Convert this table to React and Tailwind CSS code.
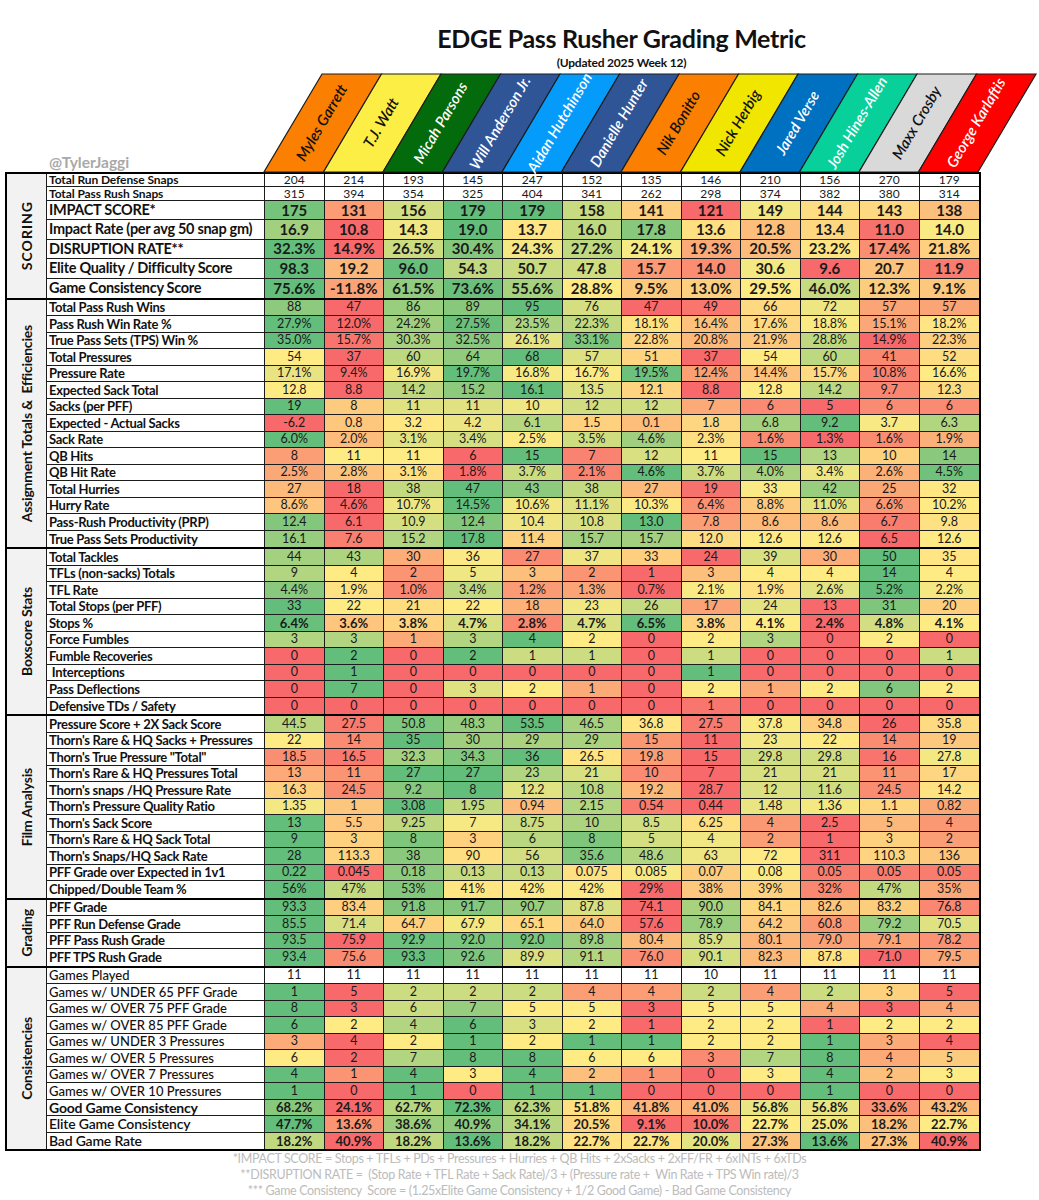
import React from 'react';

// EDGE pass rusher grading sheet (spreadsheet style heat-map table)

const players = [
  { name: 'Myles Garrett', bg: '#fb7f00', fg: '#111' },
  { name: 'T.J. Watt', bg: '#fcee45', fg: '#111' },
  { name: 'Micah Parsons', bg: '#046b0c', fg: '#fff' },
  { name: 'Will Anderson Jr.', bg: '#2f5597', fg: '#fff' },
  { name: 'Aidan Hutchinson', bg: '#049bfb', fg: '#fff' },
  { name: 'Danielle Hunter', bg: '#2f5597', fg: '#fff' },
  { name: 'Nik Bonitto', bg: '#fb7f00', fg: '#111' },
  { name: 'Nick Herbig', bg: '#f0e600', fg: '#111' },
  { name: 'Jared Verse', bg: '#0070c0', fg: '#fff' },
  { name: 'Josh Hines-Allen', bg: '#08d09b', fg: '#fff' },
  { name: 'Maxx Crosby', bg: '#d9d9d9', fg: '#111' },
  { name: 'George Karlaftis', bg: '#ff0000', fg: '#fff' },
];

const sections = [
  {
    title: 'SCORING',
    scoring: true,
    rows: [
      { label: 'Total Run Defense Snaps', plain: true, h: 'h-[13px]', vals: ['204', '214', '193', '145', '247', '152', '135', '146', '210', '156', '270', '179'] },
      { label: 'Total Pass Rush Snaps', plain: true, h: 'h-[14px]', vals: ['315', '394', '354', '325', '404', '341', '262', '298', '374', '382', '380', '314'] },
      { label: 'IMPACT SCORE*', big: true, vals: ['175', '131', '156', '179', '179', '158', '141', '121', '149', '144', '143', '138'] },
      { label: 'Impact Rate (per avg 50 snap gm)', big: true, vals: ['16.9', '10.8', '14.3', '19.0', '13.7', '16.0', '17.8', '13.6', '12.8', '13.4', '11.0', '14.0'] },
      { label: 'DISRUPTION RATE**', big: true, vals: ['32.3%', '14.9%', '26.5%', '30.4%', '24.3%', '27.2%', '24.1%', '19.3%', '20.5%', '23.2%', '17.4%', '21.8%'] },
      { label: 'Elite Quality / Difficulty Score', big: true, vals: ['98.3', '19.2', '96.0', '54.3', '50.7', '47.8', '15.7', '14.0', '30.6', '9.6', '20.7', '11.9'] },
      { label: 'Game Consistency Score', big: true, min: -45, vals: ['75.6%', '-11.8%', '61.5%', '73.6%', '55.6%', '28.8%', '9.5%', '13.0%', '29.5%', '46.0%', '12.3%', '9.1%'] },
    ],
  },
  {
    title: 'Assignment Totals &  Efficiencies',
    rows: [
      { label: 'Total Pass Rush Wins', vals: ['88', '47', '86', '89', '95', '76', '47', '49', '66', '72', '57', '57'] },
      { label: 'Pass Rush Win Rate %', vals: ['27.9%', '12.0%', '24.2%', '27.5%', '23.5%', '22.3%', '18.1%', '16.4%', '17.6%', '18.8%', '15.1%', '18.2%'] },
      { label: 'True Pass Sets (TPS) Win %', vals: ['35.0%', '15.7%', '30.3%', '32.5%', '26.1%', '33.1%', '22.8%', '20.8%', '21.9%', '28.8%', '14.9%', '22.3%'] },
      { label: 'Total Pressures', vals: ['54', '37', '60', '64', '68', '57', '51', '37', '54', '60', '41', '52'] },
      { label: 'Pressure Rate', vals: ['17.1%', '9.4%', '16.9%', '19.7%', '16.8%', '16.7%', '19.5%', '12.4%', '14.4%', '15.7%', '10.8%', '16.6%'] },
      { label: 'Expected Sack Total', vals: ['12.8', '8.8', '14.2', '15.2', '16.1', '13.5', '12.1', '8.8', '12.8', '14.2', '9.7', '12.3'] },
      { label: 'Sacks (per PFF)', vals: ['19', '8', '11', '11', '10', '12', '12', '7', '6', '5', '6', '6'] },
      { label: 'Expected - Actual Sacks', vals: ['-6.2', '0.8', '3.2', '4.2', '6.1', '1.5', '0.1', '1.8', '6.8', '9.2', '3.7', '6.3'] },
      { label: 'Sack Rate', vals: ['6.0%', '2.0%', '3.1%', '3.4%', '2.5%', '3.5%', '4.6%', '2.3%', '1.6%', '1.3%', '1.6%', '1.9%'] },
      { label: 'QB Hits', vals: ['8', '11', '11', '6', '15', '7', '12', '11', '15', '13', '10', '14'] },
      { label: 'QB Hit Rate', vals: ['2.5%', '2.8%', '3.1%', '1.8%', '3.7%', '2.1%', '4.6%', '3.7%', '4.0%', '3.4%', '2.6%', '4.5%'] },
      { label: 'Total Hurries', vals: ['27', '18', '38', '47', '43', '38', '27', '19', '33', '42', '25', '32'] },
      { label: 'Hurry Rate', vals: ['8.6%', '4.6%', '10.7%', '14.5%', '10.6%', '11.1%', '10.3%', '6.4%', '8.8%', '11.0%', '6.6%', '10.2%'] },
      { label: 'Pass-Rush Productivity (PRP)', vals: ['12.4', '6.1', '10.9', '12.4', '10.4', '10.8', '13.0', '7.8', '8.6', '8.6', '6.7', '9.8'] },
      { label: 'True Pass Sets Productivity', vals: ['16.1', '7.6', '15.2', '17.8', '11.4', '15.7', '15.7', '12.0', '12.6', '12.6', '6.5', '12.6'] },
    ],
  },
  {
    title: 'Boxscore Stats',
    rows: [
      { label: 'Total Tackles', vals: ['44', '43', '30', '36', '27', '37', '33', '24', '39', '30', '50', '35'] },
      { label: 'TFLs (non-sacks) Totals', vals: ['9', '4', '2', '5', '3', '2', '1', '3', '4', '4', '14', '4'] },
      { label: 'TFL Rate', vals: ['4.4%', '1.9%', '1.0%', '3.4%', '1.2%', '1.3%', '0.7%', '2.1%', '1.9%', '2.6%', '5.2%', '2.2%'] },
      { label: 'Total Stops (per PFF)', vals: ['33', '22', '21', '22', '18', '23', '26', '17', '24', '13', '31', '20'] },
      { label: 'Stops %', boldVals: true, vals: ['6.4%', '3.6%', '3.8%', '4.7%', '2.8%', '4.7%', '6.5%', '3.8%', '4.1%', '2.4%', '4.8%', '4.1%'] },
      { label: 'Force Fumbles', vals: ['3', '3', '1', '3', '4', '2', '0', '2', '3', '0', '2', '0'] },
      { label: 'Fumble Recoveries', vals: ['0', '2', '0', '2', '1', '1', '0', '1', '0', '0', '0', '1'] },
      { label: '\u00a0Interceptions', vals: ['0', '1', '0', '0', '0', '0', '0', '1', '0', '0', '0', '0'] },
      { label: 'Pass Deflections', vals: ['0', '7', '0', '3', '2', '1', '0', '2', '1', '2', '6', '2'] },
      { label: 'Defensive TDs / Safety', fixed: '#f8766d', vals: ['0', '0', '0', '0', '0', '0', '0', '1', '0', '0', '0', '0'] },
    ],
  },
  {
    title: 'Film Analysis',
    rows: [
      { label: 'Pressure Score + 2X Sack Score', vals: ['44.5', '27.5', '50.8', '48.3', '53.5', '46.5', '36.8', '27.5', '37.8', '34.8', '26', '35.8'] },
      { label: "Thorn's Rare & HQ Sacks + Pressures", vals: ['22', '14', '35', '30', '29', '29', '15', '11', '23', '22', '14', '19'] },
      { label: 'Thorn\'s True Pressure "Total"', vals: ['18.5', '16.5', '32.3', '34.3', '36', '26.5', '19.8', '15', '29.8', '29.8', '16', '27.8'] },
      { label: "Thorn's Rare & HQ Pressures Total", vals: ['13', '11', '27', '27', '23', '21', '10', '7', '21', '21', '11', '17'] },
      { label: "Thorn's snaps /HQ Pressure Rate", rev: true, vals: ['16.3', '24.5', '9.2', '8', '12.2', '10.8', '19.2', '28.7', '12', '11.6', '24.5', '14.2'] },
      { label: "Thorn's Pressure Quality Ratio", vals: ['1.35', '1', '3.08', '1.95', '0.94', '2.15', '0.54', '0.44', '1.48', '1.36', '1.1', '0.82'] },
      { label: "Thorn's Sack Score", vals: ['13', '5.5', '9.25', '7', '8.75', '10', '8.5', '6.25', '4', '2.5', '5', '4'] },
      { label: "Thorn's Rare & HQ Sack Total", vals: ['9', '3', '8', '3', '6', '8', '5', '4', '2', '1', '3', '2'] },
      { label: "Thorn's Snaps/HQ Sack Rate", rev: true, vals: ['28', '113.3', '38', '90', '56', '35.6', '48.6', '63', '72', '311', '110.3', '136'] },
      { label: 'PFF Grade over Expected in 1v1', vals: ['0.22', '0.045', '0.18', '0.13', '0.13', '0.075', '0.085', '0.07', '0.08', '0.05', '0.05', '0.05'] },
      { label: 'Chipped/Double Team %', vals: ['56%', '47%', '53%', '41%', '42%', '42%', '29%', '38%', '39%', '32%', '47%', '35%'] },
    ],
  },
  {
    title: 'Grading',
    rows: [
      { label: 'PFF Grade', vals: ['93.3', '83.4', '91.8', '91.7', '90.7', '87.8', '74.1', '90.0', '84.1', '82.6', '83.2', '76.8'] },
      { label: 'PFF Run Defense Grade', vals: ['85.5', '71.4', '64.7', '67.9', '65.1', '64.0', '57.6', '78.9', '64.2', '60.8', '79.2', '70.5'] },
      { label: 'PFF Pass Rush Grade', vals: ['93.5', '75.9', '92.9', '92.0', '92.0', '89.8', '80.4', '85.9', '80.1', '79.0', '79.1', '78.2'] },
      { label: 'PFF TPS Rush Grade', vals: ['93.4', '75.6', '93.3', '92.6', '89.9', '91.1', '76.0', '90.1', '82.3', '87.8', '71.0', '79.5'] },
    ],
  },
  {
    title: 'Consistencies',
    rows: [
      { label: 'Games Played', plain: true, light: true, vals: ['11', '11', '11', '11', '11', '11', '11', '10', '11', '11', '11', '11'] },
      { label: 'Games w/ UNDER 65 PFF Grade', light: true, rev: true, vals: ['1', '5', '2', '2', '2', '4', '4', '2', '4', '2', '3', '5'] },
      { label: 'Games w/ OVER 75 PFF Grade', light: true, vals: ['8', '3', '6', '7', '5', '5', '3', '5', '5', '4', '3', '4'] },
      { label: 'Games w/ OVER 85 PFF Grade', light: true, vals: ['6', '2', '4', '6', '3', '2', '1', '2', '2', '1', '2', '2'] },
      { label: 'Games w/ UNDER 3 Pressures', light: true, rev: true, vals: ['3', '4', '2', '1', '2', '1', '1', '2', '2', '1', '3', '4'] },
      { label: 'Games w/ OVER 5 Pressures', light: true, vals: ['6', '2', '7', '8', '8', '6', '6', '3', '7', '8', '4', '5'] },
      { label: 'Games w/ OVER 7 Pressures', light: true, vals: ['4', '1', '4', '3', '4', '2', '1', '0', '3', '4', '2', '3'] },
      { label: 'Games w/ OVER 10 Pressures', light: true, vals: ['1', '0', '1', '0', '1', '1', '0', '0', '0', '1', '0', '0'] },
      { label: 'Good Game Consistency', boldVals: true, strong: true, vals: ['68.2%', '24.1%', '62.7%', '72.3%', '62.3%', '51.8%', '41.8%', '41.0%', '56.8%', '56.8%', '33.6%', '43.2%'] },
      { label: 'Elite Game Consistency', boldVals: true, medium: true, vals: ['47.7%', '13.6%', '38.6%', '40.9%', '34.1%', '20.5%', '9.1%', '10.0%', '22.7%', '25.0%', '18.2%', '22.7%'] },
      { label: 'Bad Game Rate', boldVals: true, medium: true, rev: true, vals: ['18.2%', '40.9%', '18.2%', '13.6%', '18.2%', '22.7%', '22.7%', '20.0%', '27.3%', '13.6%', '27.3%', '40.9%'] },
    ],
  },
];

const RED = [248, 105, 107];
const YEL = [255, 235, 132];
const GRN = [99, 190, 123];

const mix = (a, b, t) => {
  const c = a.map((v, i) => Math.round(v + (b[i] - v) * Math.max(0, Math.min(1, t))));
  return `rgb(${c[0]},${c[1]},${c[2]})`;
};

// excel style 3-colour scale: min / median / max
const scaleColors = (row) => {
  if (row.plain) return row.vals.map(() => '#ffffff');
  const nums = row.vals.map((v) => parseFloat(v));
  const sorted = [...nums].sort((a, b) => a - b);
  const n = sorted.length;
  const mid = (sorted[n / 2 - 1] + sorted[n / 2]) / 2;
  const min = row.min ?? sorted[0];
  const max = sorted[n - 1];
  const lo = row.rev ? GRN : RED;
  const hi = row.rev ? RED : GRN;
  return nums.map((v) => {
    if (row.fixed && v === max && max !== min) return row.fixed;
    if (v <= mid) return mid === min ? mix(lo, YEL, 0) : mix(lo, YEL, (v - min) / (mid - min));
    return mix(YEL, hi, (v - mid) / (max - mid));
  });
};

const Row = ({ row, last }) => {
  const colors = scaleColors(row);
  const h = row.h || (row.big ? 'h-[19.4px]' : 'h-[16.5px]');
  let labelCls = 'font-bold text-[13px] tracking-[-0.3px]';
  if (row.big) labelCls = 'font-bold text-[14.5px] tracking-[-0.3px]';
  if (row.plain && !row.light) labelCls = 'font-bold text-[12px] tracking-[-0.1px]';
  if (row.light) labelCls = 'font-medium text-[13px] tracking-[0px]';
  if (row.strong) labelCls = 'font-bold text-[14px] tracking-[-0.2px]';
  if (row.medium) labelCls = 'font-semibold text-[14px] tracking-[-0.2px]';
  let valCls = 'font-normal text-[12.5px]';
  if (row.plain && !row.light) valCls = 'font-normal text-[12px]';
  if (row.big) valCls = 'font-bold text-[15px]';
  if (row.boldVals) valCls = 'font-bold text-[13px]';

  return (
    <div className={`flex ${h} ${last ? '' : 'border-b border-[#1c1c1c]'}`}>
      <div className={`w-[218px] shrink-0 border-r border-[#1c1c1c] bg-white pl-[2px] flex items-center whitespace-pre leading-none text-[#111] ${labelCls}`}>
        {row.label}
      </div>
      {row.vals.map((v, i) => (
        <div
          key={i}
          style={{ backgroundColor: colors[i] }}
          className={`w-[59.5px] shrink-0 flex items-center justify-center leading-none text-[#1a1a1a] ${i < 11 ? 'border-r border-[#1c1c1c]' : ''} ${valCls}`}
        >
          {v}
        </div>
      ))}
    </div>
  );
};

const Section = ({ section }) => (
  <div className={`flex border-x-2 border-b-2 border-black ${section.scoring ? 'border-t-2' : ''}`}>
    <div className="w-[40px] shrink-0 border-r border-[#1c1c1c] bg-[#f2f2f2] flex items-center justify-center overflow-hidden">
      <span className={`[writing-mode:vertical-rl] rotate-180 font-bold whitespace-pre text-[#111] ${section.scoring ? 'text-[14px] tracking-[1px]' : 'text-[14px] tracking-[-0.2px]'}`}>
        {section.title}
      </span>
    </div>
    <div className="flex flex-col">
      {section.rows.map((r, i) => (
        <Row key={r.label} row={r} last={i === section.rows.length - 1} />
      ))}
    </div>
  </div>
);

const BandHeader = () => {
  const W = 59.5;
  const DX = 58;
  const H = 99;
  return (
    <svg width="775" height={H} className="block overflow-visible">
      {players.map((p, i) => {
        const x0 = i * W;
        const cx = x0 + W / 2 + DX / 2;
        const cy = H / 2 + 1;
        return (
          <g key={p.name}>
            <polygon
              points={`${x0},${H} ${x0 + W},${H} ${x0 + W + DX},1 ${x0 + DX},1`}
              fill={p.bg}
              stroke="#1c1c1c"
              strokeWidth="1.2"
            />
            <text
              x={cx}
              y={cy}
              transform={`rotate(-59.6 ${cx} ${cy})`}
              textAnchor="middle"
              dominantBaseline="middle"
              fill={p.fg}
              fontSize="15"
              fontWeight="600"
              fontStyle="italic"
              fontFamily="Lato, sans-serif"
            >
              {p.name}
            </text>
          </g>
        );
      })}
    </svg>
  );
};

export default function App() {
  return (
    <div className="w-[1039px] min-h-[1200px] bg-white font-['Lato',sans-serif] text-black">
      <div className="flex pt-[22px]">
        <div className="w-[264px] shrink-0" />
        <div className="w-[715px] flex flex-col items-center">
          <h1 className="text-[25px] leading-[32px] font-bold tracking-[-0.3px] text-[#111]">EDGE Pass Rusher Grading Metric</h1>
          <p className="mt-[2px] text-[12px] leading-[14px] font-bold tracking-[-0.2px] text-[#111]">(Updated 2025 Week 12)</p>
        </div>
      </div>
      <div className="flex mt-[3px]">
        <div className="w-[264px] shrink-0 flex items-end pl-[49px]">
          <span className="text-[15.5px] leading-[20px] font-bold text-[#a9a9a9]">@TylerJaggi</span>
        </div>
        <BandHeader />
      </div>
      <div className="ml-[5px] w-[976px]">
        {sections.map((s) => (
          <Section key={s.title} section={s} />
        ))}
      </div>
      <div className="flex flex-col items-center text-[12.5px] leading-[16px] tracking-[-0.35px] text-[#bcbcbc] whitespace-pre">
        <p>*IMPACT SCORE = Stops + TFLs + PDs + Pressures + Hurries + QB Hits + 2xSacks + 2xFF/FR + 6xINTs + 6xTDs</p>
        <p>**DISRUPTION RATE =  (Stop Rate + TFL Rate + Sack Rate)/3 + (Pressure rate +  Win Rate + TPS Win rate)/3</p>
        <p>*** Game Consistency  Score = (1.25xElite Game Consistency + 1/2 Good Game) - Bad Game Consistency</p>
      </div>
    </div>
  );
}
